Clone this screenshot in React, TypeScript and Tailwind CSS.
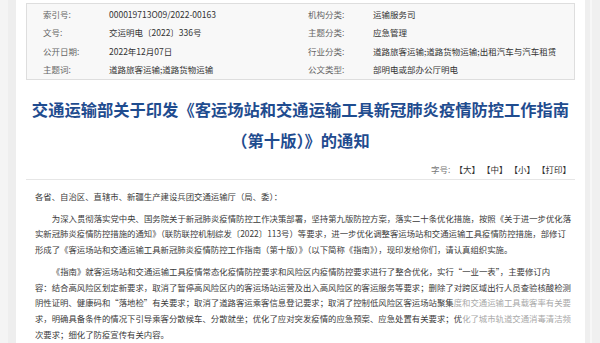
const infoRows = [
  ['索引号:', '000019713O09/2022-00163', '机构分类:', '运输服务司'],
  ['文号:', '交运明电〔2022〕336号', '主题分类:', '应急管理'],
  ['公开日期:', '2022年12月07日', '行业分类:', '道路旅客运输;道路货物运输;出租汽车与汽车租赁'],
  ['主题词:', '道路旅客运输;道路货物运输', '公文类型:', '部明电或部办公厅明电'],
];

const Line = ({ children, indent }: { children: React.ReactNode; indent?: boolean }) => (
  <div className={`whitespace-nowrap leading-[15.7px] ${indent ? 'pl-[16.8px]' : ''}`}>{children}</div>
);

const App = () => {
  return (
    <div className="flex h-[343px] w-[600px] overflow-hidden bg-[#f1f1f1] font-['Noto_Sans_CJK_SC',sans-serif]">
      {/* left rail */}
      <div className="flex w-[16px] shrink-0">
        <div className="w-[8px] bg-[#f4f4f4]" />
        <div className="w-[8px] bg-[#eeeeee]" />
      </div>

      {/* main article */}
      <div className="flex w-[569px] shrink-0 flex-col bg-white px-[10px] pt-[3px]">
        <div className="border border-[#dedede] bg-[#f8f8f8] pt-[1px] text-[8.5px]">
          {infoRows.map((r) => (
            <div key={r[0]} className="flex h-[18.5px] items-center pl-[16px]">
              <span className="w-[66px] text-[#666]">{r[0]}</span>
              <span className="w-[199px] text-[#333]">{r[1]}</span>
              <span className="w-[65px] text-[#666]">{r[2]}</span>
              <span className="text-[#333]">{r[3]}</span>
            </div>
          ))}
        </div>

        <div className="mt-[14px] text-center text-[16.3px] font-bold leading-[31px] text-[#1f4c8f]">
          <div className="whitespace-nowrap">交通运输部关于印发《客运场站和交通运输工具新冠肺炎疫情防控工作指南</div>
          <div className="whitespace-nowrap">（第十版）》的通知</div>
        </div>

        <div className="mt-[5px] flex h-[16px] items-center justify-end gap-[2px] pr-[4px] text-[8.5px] text-[#333]">
          <span className="mr-[2px] text-[#777]">字号:</span>
          <span>【大】</span>
          <span>【中】</span>
          <span>【小】</span>
          <span>【打印】</span>
        </div>
        <div className="mt-[2px] border-t border-[#e6e6e6]" />

        <div className="pl-[9px] pt-[9px] text-[8.4px] text-[#3a3a3a]">
          <Line>各省、自治区、直辖市、新疆生产建设兵团交通运输厅（局、委）：</Line>
          <div className="mt-[6px]">
            <Line indent>为深入贯彻落实党中央、国务院关于新冠肺炎疫情防控工作决策部署，坚持第九版防控方案，落实二十条优化措施，按照《关于进一步优化落</Line>
            <Line>实新冠肺炎疫情防控措施的通知》（联防联控机制综发〔2022〕113号）等要求，进一步优化调整客运场站和交通运输工具疫情防控措施，部修订</Line>
            <Line>形成了《客运场站和交通运输工具新冠肺炎疫情防控工作指南（第十版）》（以下简称《指南》），现印发给你们，请认真组织实施。</Line>
          </div>
          <div className="mt-[6px]">
            <Line indent>《指南》就客运场站和交通运输工具疫情常态化疫情防控要求和风险区内疫情防控要求进行了整合优化，实行“一业一表”，主要修订内</Line>
            <Line>容：结合高风险区划定新要求，取消了暂停高风险区内的客运场站运营及出入高风险区的客运服务等要求；删除了对跨区域出行人员查验核酸检测</Line>
            <Line>
              阴性证明、健康码和“落地检”有关要求；取消了道路客运乘客信息登记要求；取消了控制低风险区客运场站聚集
              <span className="text-[#a8a8a8]">度和交通运输工具载客率有关要</span>
            </Line>
            <Line>
              求，明确具备条件的情况下引导乘客分散候车、分散就坐；优化了应对突发疫情的应急预案、应急处置有关要求；优
              <span className="text-[#a8a8a8]">化了城市轨道交通消毒清洁频</span>
            </Line>
            <Line>次要求；细化了防疫宣传有关内容。</Line>
          </div>
        </div>
      </div>

      {/* right rail */}
      <div className="flex w-[15px] shrink-0">
        <div className="w-[5px] bg-[#efefef]" />
        <div className="w-[2px] bg-[#f7f7f7]" />
        <div className="flex-1 bg-[#f0f0f0]" />
      </div>
    </div>
  );
};

export default App;
